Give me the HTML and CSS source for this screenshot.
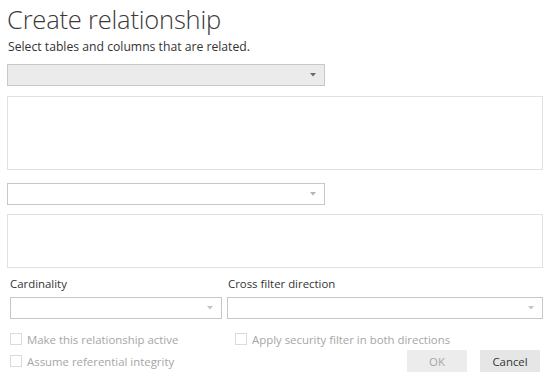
FILE: index.html
```html
<!DOCTYPE html>
<html>
<head>
<meta charset="utf-8">
<link rel="stylesheet" href="styles.css">
</head>
<body>
<div class="dialog">
  <h1 class="title">Create relationship</h1>
  <p class="subtitle">Select tables and columns that are related.</p>
  <div class="select select-gray select-wide">
    <svg class="arrow" width="6" height="4" viewBox="0 0 6 4"><polygon points="0,0 6,0 3,3.5" fill="#6a6a6a"/></svg>
  </div>
  <div class="grid-box box-tall"></div>
  <div class="select select-wide select-second">
    <svg class="arrow" width="6" height="4" viewBox="0 0 6 4"><polygon points="0,0 6,0 3,3.5" fill="#b4b4b4"/></svg>
  </div>
  <div class="grid-box box-short"></div>
  <div class="options">
    <div class="field field-card">
      <div class="label">Cardinality</div>
      <div class="select select-small">
        <svg class="arrow" width="6" height="4" viewBox="0 0 6 4"><polygon points="0,0 6,0 3,3.5" fill="#c4c4c4"/></svg>
      </div>
    </div>
    <div class="field field-cross">
      <div class="label">Cross filter direction</div>
      <div class="select select-small">
        <svg class="arrow" width="6" height="4" viewBox="0 0 6 4"><polygon points="0,0 6,0 3,3.5" fill="#c4c4c4"/></svg>
      </div>
    </div>
  </div>
  <div class="checks-row">
    <label class="check check-left"><span class="box"></span>Make this relationship active</label>
    <label class="check"><span class="box"></span>Apply security filter in both directions</label>
  </div>
  <div class="checks-row row-two">
    <label class="check check-left"><span class="box"></span>Assume referential integrity</label>
    <div class="buttons">
      <button class="btn btn-disabled">OK</button>
      <button class="btn">Cancel</button>
    </div>
  </div>
</div>
</body>
</html>
```
FILE: styles.css
```css
html, body {
  margin: 0;
  padding: 0;
  background: #ffffff;
}
body {
  font-family: "Open Sans", "Noto Sans", sans-serif;
  color: #333333;
}
.dialog {
  width: 549px;
  height: 385px;
  box-sizing: border-box;
  padding: 2px 6px 0 7px;
  display: flex;
  flex-direction: column;
}
.title {
  margin: 0;
  font-weight: 300;
  font-size: 25.5px;
  line-height: 34px;
  height: 34px;
  color: #3a3a3a;
  letter-spacing: -0.2px;
}
.subtitle {
  margin: 3px 0 0 1px;
  font-size: 12.2px;
  line-height: 16px;
  height: 16px;
  color: #333;
}
.select {
  box-sizing: border-box;
  border: 1px solid #c8c8c8;
  background: #ffffff;
  display: flex;
  align-items: center;
  justify-content: flex-end;
  padding-right: 8px;
}
.select-gray {
  background: #ebebeb;
}
.select-wide {
  width: 318px;
  height: 22px;
  margin-top: 9px;
}
.select-second {
  margin-top: 13px;
}
.arrow {
  display: block;
}
.grid-box {
  box-sizing: border-box;
  border: 1px solid #e1e1e1;
  width: 536px;
}
.box-tall {
  height: 74px;
  margin-top: 10px;
}
.box-short {
  height: 54px;
  margin-top: 9px;
}
.options {
  display: flex;
  margin-top: 8px;
  gap: 5px;
}
.field {
  display: flex;
  flex-direction: column;
}
.field-card {
  width: 212px;
  margin-left: 3px;
}
.field-cross {
  width: 316px;
}
.label {
  font-size: 11.4px;
  line-height: 16px;
  height: 16px;
  color: #333;
}
.field-cross .label {
  padding-left: 1px;
}
.select-small {
  height: 22px;
  margin-top: 5px;
}
.checks-row {
  display: flex;
  align-items: center;
  margin-top: 12px;
  height: 16px;
}
.row-two {
  margin-top: 3px;
  height: 22px;
}
.check {
  display: flex;
  align-items: center;
  font-size: 11.4px;
  color: #a6a6a6;
  white-space: nowrap;
}
.check-left {
  width: 225px;
  margin-left: 3px;
}
.box {
  width: 12px;
  height: 12px;
  box-sizing: border-box;
  border: 1px solid #dadada;
  background: #fff;
  margin-right: 5px;
  flex: none;
}
.buttons {
  margin-left: auto;
  display: flex;
  gap: 13px;
  margin-right: 3px;
}
.btn {
  width: 60px;
  height: 22px;
  border: none;
  background: #e6e6e6;
  font-family: "Open Sans", "Noto Sans", sans-serif;
  font-size: 11.4px;
  color: #333;
  padding: 0;
}
.btn-disabled {
  background: #ececec;
  color: #a6a6a6;
}
```
